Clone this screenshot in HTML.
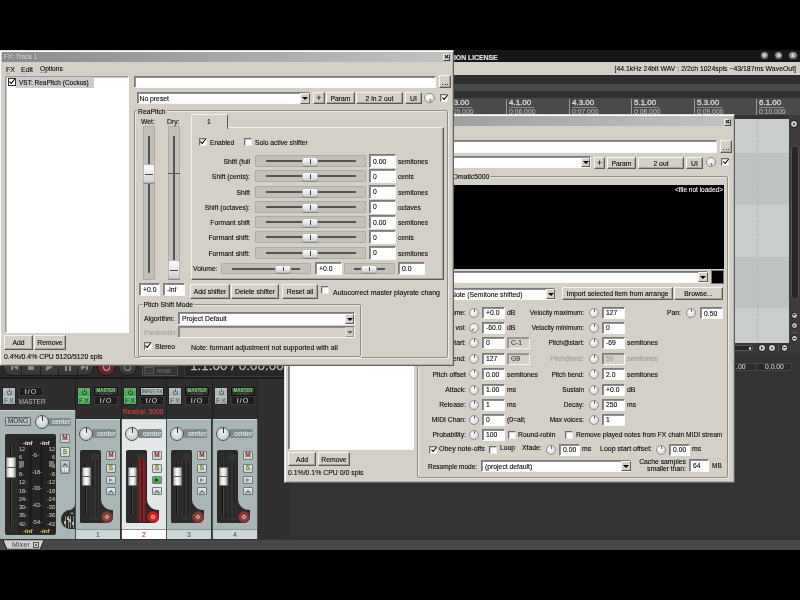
<!DOCTYPE html>
<html><head><meta charset="utf-8">
<style>
*{margin:0;padding:0;box-sizing:border-box}
html,body{width:800px;height:600px;overflow:hidden;background:#000}
body{position:relative;font-family:"Liberation Sans",sans-serif;font-size:6.8px;color:#000;-webkit-text-stroke:0.08px currentColor}
.L{position:absolute;left:0;top:0;width:800px;height:600px}
.a{position:absolute}
.t{position:absolute;white-space:nowrap;line-height:1}
.btn{position:absolute;background:#d4d0c8;border:1px solid;border-color:#f4f3f0 #5a5a5a #5a5a5a #f4f3f0;box-shadow:inset -1px -1px 0 #a8a59f;text-align:center;white-space:nowrap;display:flex;align-items:center;justify-content:center;font-size:6.8px}
.ed{position:absolute;background:#fff;border:1px solid;border-color:#7a7a7a #fafafa #fafafa #7a7a7a;box-shadow:inset 1px 1px 0 #909090;white-space:nowrap;padding-left:3px;display:flex;align-items:center;font-size:6.8px}
.dis{background:#d4d0c8;color:#9a9a9a}
.cb{position:absolute;width:8px;height:8px;background:#fff;border:1px solid;border-color:#6a6a6a #e8e8e8 #e8e8e8 #6a6a6a;box-shadow:inset 0.5px 0.5px 0 #aaa}
.ck::after{content:"";position:absolute;width:4.5px;height:2.2px;border-left:1.6px solid #000;border-bottom:1.6px solid #000;transform:rotate(-50deg);transform-origin:0 0;top:3.2px;left:0.6px}
.grp{position:absolute;border:1px solid #8f8d88;box-shadow:1px 1px 0 #ebe9e4, inset 1px 1px 0 #ebe9e4;border-radius:2px}
.win{position:absolute;background:#d4d0c8;border:1px solid;border-color:#dcd9d2 #5e5e5e #5e5e5e #dcd9d2;box-shadow:inset 1px 1px 0 #fff, inset -1px -1px 0 #b5b2ab}
.dd{position:absolute;background:#d4d0c8;border:1px solid;border-color:#f4f3f0 #5a5a5a #5a5a5a #f4f3f0}
.dd::after{content:"";position:absolute;left:50%;top:50%;margin-left:-3px;margin-top:-1.5px;border-left:3px solid transparent;border-right:3px solid transparent;border-top:3.5px solid #000}
.hs{position:absolute;background:#c3c0b9;border:1px solid #aeaba4;border-radius:1px}
.hs .g{position:absolute;height:2px;background:#555;top:50%;margin-top:-1px}
.th{position:absolute;background:linear-gradient(180deg,#fdfdfd,#e6e6e6 60%,#cfcfcf);border:1px solid #b8b8b8;border-radius:2px;box-shadow:0 1px 0 #888}
.th::after{content:"";position:absolute;left:50%;top:1px;bottom:1px;width:1px;background:#444}
.vt::after{left:1px;right:1px;top:50%;bottom:auto;width:auto;height:1px}
.knob{position:absolute;border-radius:50%;background:radial-gradient(circle at 40% 35%,#ffffff,#e4e4e4 55%,#c4c4c4);border:1px solid #8f8f8f}
</style></head><body><div id="root" style="position:absolute;left:0;top:0;width:800px;height:600px;filter:blur(0.6px);will-change:transform">
<div class="L" id="main">
<div class="a" style="left:0px;top:50px;width:800px;height:12px;background:#161616"></div>
<div class="t" style="left:454px;top:54px;font-size:7px;font-weight:bold;color:#e6e6e6;letter-spacing:-0.1px">ION LICENSE</div>
<div class="a" style="left:759.9px;top:51px;width:9.2px;height:9.2px;border-radius:50%;background:radial-gradient(circle at 50% 35%,#b0b0b0,#808080 60%,#5a5a5a);border:0.6px solid #2a2a2a;color:#e8e8e8;font-size:6px;font-weight:bold;display:flex;align-items:center;justify-content:center;line-height:1;padding-bottom:1px">v</div>
<div class="a" style="left:774.1999999999999px;top:51px;width:9.2px;height:9.2px;border-radius:50%;background:radial-gradient(circle at 50% 35%,#b0b0b0,#808080 60%,#5a5a5a);border:0.6px solid #2a2a2a;color:#e8e8e8;font-size:6px;font-weight:bold;display:flex;align-items:center;justify-content:center;line-height:1;padding-bottom:1px">o</div>
<div class="a" style="left:788.4px;top:51px;width:9.2px;height:9.2px;border-radius:50%;background:radial-gradient(circle at 50% 35%,#b0b0b0,#808080 60%,#5a5a5a);border:0.6px solid #2a2a2a;color:#e8e8e8;font-size:6px;font-weight:bold;display:flex;align-items:center;justify-content:center;line-height:1;padding-bottom:1px">x</div>
<div class="a" style="left:0px;top:62px;width:800px;height:13px;background:#d4d0c8"></div>
<div class="t" style="right:4px;top:66.3px;font-size:6.9px;">[44.1kHz 24bit WAV : 2/2ch 1024spls ~43/187ms WaveOut]</div>
<div class="a" style="left:0px;top:75px;width:800px;height:9px;background:#2f2f2f"></div>
<div class="a" style="left:0px;top:84px;width:800px;height:7px;background:#484848"></div>
<div class="a" style="left:0px;top:91px;width:800px;height:7px;background:#313131"></div>
<div class="a" style="left:0px;top:98px;width:800px;height:17px;background:#4a4a4a"></div>
<div class="a" style="left:0px;top:115px;width:800px;height:434.5px;background:#333"></div>
<div class="a" style="left:444px;top:99px;width:1px;height:16px;background:#9a9a9a"></div>
<div class="t" style="left:447px;top:99.3px;font-size:8px;color:#d4d4d4;-webkit-text-stroke:0.35px #d4d4d4">3.3.00</div>
<div class="a" style="left:447px;top:107px;width:25px;height:1px;background:#8a8a8a"></div>
<div class="t" style="left:447px;top:108.8px;font-size:6.8px;color:#b8b8b8">0:05.000</div>
<div class="a" style="left:506px;top:99px;width:1px;height:16px;background:#9a9a9a"></div>
<div class="t" style="left:509px;top:99.3px;font-size:8px;color:#d4d4d4;-webkit-text-stroke:0.35px #d4d4d4">4.1.00</div>
<div class="a" style="left:509px;top:107px;width:25px;height:1px;background:#8a8a8a"></div>
<div class="t" style="left:509px;top:108.8px;font-size:6.8px;color:#b8b8b8">0:06.000</div>
<div class="a" style="left:569px;top:99px;width:1px;height:16px;background:#9a9a9a"></div>
<div class="t" style="left:572px;top:99.3px;font-size:8px;color:#d4d4d4;-webkit-text-stroke:0.35px #d4d4d4">4.3.00</div>
<div class="a" style="left:572px;top:107px;width:25px;height:1px;background:#8a8a8a"></div>
<div class="t" style="left:572px;top:108.8px;font-size:6.8px;color:#b8b8b8">0:07.000</div>
<div class="a" style="left:631px;top:99px;width:1px;height:16px;background:#9a9a9a"></div>
<div class="t" style="left:634px;top:99.3px;font-size:8px;color:#d4d4d4;-webkit-text-stroke:0.35px #d4d4d4">5.1.00</div>
<div class="a" style="left:634px;top:107px;width:25px;height:1px;background:#8a8a8a"></div>
<div class="t" style="left:634px;top:108.8px;font-size:6.8px;color:#b8b8b8">0:08.000</div>
<div class="a" style="left:694px;top:99px;width:1px;height:16px;background:#9a9a9a"></div>
<div class="t" style="left:697px;top:99.3px;font-size:8px;color:#d4d4d4;-webkit-text-stroke:0.35px #d4d4d4">5.3.00</div>
<div class="a" style="left:697px;top:107px;width:25px;height:1px;background:#8a8a8a"></div>
<div class="t" style="left:697px;top:108.8px;font-size:6.8px;color:#b8b8b8">0:09.000</div>
<div class="a" style="left:756px;top:99px;width:1px;height:16px;background:#9a9a9a"></div>
<div class="t" style="left:759px;top:99.3px;font-size:8px;color:#d4d4d4;-webkit-text-stroke:0.35px #d4d4d4">6.1.00</div>
<div class="a" style="left:759px;top:107px;width:25px;height:1px;background:#8a8a8a"></div>
<div class="t" style="left:759px;top:108.8px;font-size:6.8px;color:#b8b8b8">0:10.000</div>
<div class="a" style="left:735px;top:119px;width:54px;height:33.7px;background:#cacdcd"></div>
<div class="a" style="left:735px;top:152.7px;width:54px;height:52.0px;background:#bfc2c2"></div>
<div class="a" style="left:735px;top:204.7px;width:54px;height:52.0px;background:#cacdcd"></div>
<div class="a" style="left:735px;top:256.7px;width:54px;height:51.6px;background:#bfc2c2"></div>
<div class="a" style="left:735px;top:308.3px;width:54px;height:34.7px;background:#cacdcd"></div>
<div class="a" style="left:756.5px;top:119px;width:1px;height:224px;background:repeating-linear-gradient(180deg,#b3b6b6 0 3px,transparent 3px 5px)"></div>
<div class="a" style="left:789px;top:115px;width:11px;height:237px;background:#3b3b3b"></div>
<div class="a" style="left:791px;top:144.5px;width:7.5px;height:155px;background:#262626;border:1px solid #555;border-radius:4px"></div>
<div class="a" style="left:790.2px;top:120.2px;width:7.6px;height:7.6px;border-radius:50%;background:radial-gradient(circle at 50% 40%,#e6e6e6,#a9a9a9);border:0.5px solid #222;display:flex;align-items:center;justify-content:center;color:#333;font-size:5px;font-weight:bold;line-height:1"><div style="width:2px;height:2px;border-radius:50%;background:#333"></div></div>
<div class="a" style="left:790.6px;top:311.7px;width:7.2px;height:7.2px;border-radius:50%;background:radial-gradient(circle at 50% 40%,#e6e6e6,#a9a9a9);border:0.5px solid #222;display:flex;align-items:center;justify-content:center;color:#333;font-size:5px;font-weight:bold;line-height:1"><div style="border-top:2.5px solid #333;border-left:2px solid transparent;border-right:2px solid transparent"></div></div>
<div class="a" style="left:790.6px;top:321.7px;width:7.2px;height:7.2px;border-radius:50%;background:radial-gradient(circle at 50% 40%,#e6e6e6,#a9a9a9);border:0.5px solid #222;display:flex;align-items:center;justify-content:center;color:#333;font-size:5px;font-weight:bold;line-height:1">+</div>
<div class="a" style="left:791px;top:331.5px;width:6px;height:1px;background:#555"></div>
<div class="a" style="left:790.6px;top:334.7px;width:7.2px;height:7.2px;border-radius:50%;background:radial-gradient(circle at 50% 40%,#e6e6e6,#a9a9a9);border:0.5px solid #222;display:flex;align-items:center;justify-content:center;color:#333;font-size:5px;font-weight:bold;line-height:1"><div style="width:3px;height:1px;background:#333"></div></div>
<div class="a" style="left:735px;top:343px;width:65px;height:10px;background:#3a3a3a"></div>
<div class="a" style="left:735px;top:345.3px;width:18.3px;height:6px;background:#262626;border:1px solid #555;border-left:none;border-radius:0 3px 3px 0"></div>
<div class="a" style="left:748.5px;top:347px;width:2.5px;height:2.5px;background:#ddd;border-radius:50%"></div>
<div class="a" style="left:758.4px;top:344.4px;width:7.2px;height:7.2px;border-radius:50%;background:radial-gradient(circle at 50% 40%,#e6e6e6,#a9a9a9);border:0.5px solid #222;display:flex;align-items:center;justify-content:center;color:#333;font-size:5px;font-weight:bold;line-height:1"><div style="border-left:2.5px solid #333;border-top:2px solid transparent;border-bottom:2px solid transparent"></div></div>
<div class="a" style="left:768.4px;top:344.4px;width:7.2px;height:7.2px;border-radius:50%;background:radial-gradient(circle at 50% 40%,#e6e6e6,#a9a9a9);border:0.5px solid #222;display:flex;align-items:center;justify-content:center;color:#333;font-size:5px;font-weight:bold;line-height:1"><div style="width:2px;height:2px;border-radius:50%;background:#555"></div></div>
<div class="a" style="left:778px;top:345px;width:1px;height:6px;background:#555"></div>
<div class="a" style="left:780.6px;top:344.4px;width:7.2px;height:7.2px;border-radius:50%;background:radial-gradient(circle at 50% 40%,#e6e6e6,#a9a9a9);border:0.5px solid #222;display:flex;align-items:center;justify-content:center;color:#333;font-size:5px;font-weight:bold;line-height:1"><div style="width:3px;height:1px;background:#333"></div></div>
<div class="a" style="left:735px;top:352.5px;width:65px;height:187px;background:#333"></div>
<div class="a" style="left:733px;top:362.8px;width:59px;height:8.5px;background:#2a2a2a;border:1px solid #474747;border-radius:2px"></div>
<div class="a" style="left:755.5px;top:363px;width:1px;height:8px;background:#474747"></div>
<div class="t" style="left:765px;top:364px;font-size:6.8px;color:#cfcfcf">0.0.00</div>
<div class="t" style="left:736px;top:364px;font-size:6.8px;color:#cfcfcf">.00</div>
<div class="a" style="left:0px;top:539.5px;width:800px;height:10px;background:#474747"></div>
</div>
<div class="L" id="mixer">
<div class="a" style="left:0px;top:365px;width:290px;height:13px;background:#2a2a2a"></div>
<div class="a" style="left:0px;top:377px;width:290px;height:2px;background:#1b1b1b"></div>
<div class="a" style="left:3px;top:355px;width:91px;height:21px;background:linear-gradient(#474747,#363636);border:1px solid #1a1a1a;border-radius:0 0 8px 8px"></div>
<div class="a" style="left:21px;top:356px;width:1px;height:19px;background:#202020"></div>
<div class="a" style="left:40px;top:356px;width:1px;height:19px;background:#202020"></div>
<div class="a" style="left:58px;top:356px;width:1px;height:19px;background:#202020"></div>
<div class="a" style="left:77px;top:356px;width:1px;height:19px;background:#202020"></div>
<div class="a" style="left:11px;top:364px;width:1.5px;height:6px;background:#8c8c8c"></div>
<div class="a" style="left:12.5px;top:364px;border-right:5px solid #8c8c8c;border-top:3px solid transparent;border-bottom:3px solid transparent"></div>
<div class="a" style="left:27.5px;top:364px;width:6px;height:6px;background:#8c8c8c"></div>
<div class="a" style="left:46px;top:363px;border-left:7px solid #8c8c8c;border-top:4px solid transparent;border-bottom:4px solid transparent"></div>
<div class="a" style="left:64.5px;top:363.5px;width:2px;height:7px;background:#8c8c8c"></div>
<div class="a" style="left:68.5px;top:363.5px;width:2px;height:7px;background:#8c8c8c"></div>
<div class="a" style="left:81px;top:364px;border-left:5px solid #8c8c8c;border-top:3px solid transparent;border-bottom:3px solid transparent"></div>
<div class="a" style="left:86px;top:364px;width:1.5px;height:6px;background:#8c8c8c"></div>
<div class="a" style="left:97.0px;top:356.5px;width:19.0px;height:19.0px;border-radius:50%;background:radial-gradient(circle,#7a3232,#622424 70%,#451818);border:1px solid #1a1a1a;box-sizing:border-box"></div>
<div class="a" style="left:102.7px;top:363.2px;width:7.6px;height:7.6px;border-radius:50%;background:transparent;border:1.6px solid #e8c4c4;box-sizing:border-box"></div>
<div class="a" style="left:118.0px;top:356.5px;width:19.0px;height:19.0px;border-radius:50%;background:linear-gradient(#474747,#363636);border:1px solid #1a1a1a;box-sizing:border-box"></div>
<div class="a" style="left:124.0px;top:363.5px;width:7.0px;height:7.0px;border-radius:50%;background:transparent;border:1.4px solid #8c8c8c;border-top-color:transparent;box-sizing:border-box"></div>
<div class="a" style="left:142px;top:366px;width:36px;height:10px;background:#333;border:1px solid #505050;border-radius:2px"></div>
<div class="t" style="left:157px;top:369px;font-size:5px;color:#666;font-weight:bold">NONE</div>
<div class="a" style="left:144px;top:367px;width:10px;height:7px;border:1px solid #555;background:#3a3a3a"></div>
<div class="a" style="left:184px;top:363px;width:106px;height:14px;background:#262626;border:1px solid #3c3c3c;border-radius:2px"></div>
<div class="t" style="left:190px;top:359.4px;font-size:13.5px;color:#bababa;-webkit-text-stroke:0.3px #bababa">1.1.00 / 0:00.000</div>
<div class="a" style="left:0px;top:379px;width:290px;height:160px;background:#2e2e2e"></div>
<div class="a" style="left:258px;top:379px;width:26px;height:160px;background:#303030"></div>
<div class="a" style="left:0px;top:410px;width:76px;height:129px;background:#aab5b5"></div>
<div class="a" style="left:0px;top:410px;width:76px;height:1px;background:#cad3d3"></div>
<div class="a" style="left:75px;top:379px;width:1px;height:31px;background:#1e1e1e"></div>
<div class="a" style="left:75px;top:410px;width:1px;height:129px;background:#4a5050"></div>
<div class="a" style="left:2px;top:387px;width:14px;height:18px;background:#222;border-radius:1px"></div><div class="a" style="left:3px;top:388px;width:12px;height:8px;background:linear-gradient(#b7c3c3,#a8b4b4);display:flex;align-items:center;justify-content:center"><div style="position:relative;width:5px;height:5px;border-radius:50%;border:1px solid #5a6464;border-top-color:transparent;margin-top:1px"><div style="position:absolute;left:1px;top:-2px;width:1px;height:3px;background:#5a6464"></div></div></div><div class="a" style="left:3px;top:396px;width:12px;height:8px;background:linear-gradient(#b9c5c5,#a3afaf);color:#4f5a5a;font-size:7px;display:flex;align-items:center;justify-content:center;letter-spacing:1px;padding-left:1px">FX</div>
<div class="a" style="left:19px;top:387px;width:24px;height:9px;background:#1c1c1c;border:1px solid #3a3a3a;color:#d8d8d8;font-size:7px;text-align:center;line-height:7px;letter-spacing:1px">I/O</div>
<div class="t" style="left:18.5px;top:398.8px;font-size:6.5px;color:#bdbdbd;-webkit-text-stroke:0">MASTER</div>
<div class="a" style="left:5px;top:417px;width:26px;height:9px;background:linear-gradient(#c6d0d0,#aab6b6);border:1px solid #6f7a7a;border-radius:1px;color:#333;font-size:6.4px;font-weight:bold;display:flex;align-items:center;justify-content:center;line-height:1;font-weight:normal;border-color:#5b6666;-webkit-text-stroke:0.1px #333">MONO</div>
<div class="a" style="left:46px;top:418px;width:25px;height:8px;background:#7f8b8b;border-radius:0 2px 2px 0"></div>
<div class="t" style="left:52px;top:419px;font-size:6.6px;color:#e8eeee">center</div>
<div class="a" style="left:35px;top:415px;width:14px;height:14px;border-radius:50%;background:radial-gradient(circle at 45% 40%,#f2f2f2,#cfd4d4 60%,#9aa2a2);border:1.5px solid #4a5454;box-sizing:border-box"></div>
<div class="a" style="left:42px;top:416px;width:1px;height:5px;background:#333"></div>
<div class="a" style="left:5px;top:434px;width:51px;height:101px;background:#2b2b2b;border-radius:2px"></div>
<div class="a" style="left:18px;top:438px;width:37px;height:95px;background:#242424"></div>
<div class="a" style="left:29px;top:447px;width:3px;height:84px;background:#1d1d1d"></div>
<div class="a" style="left:40px;top:447px;width:3px;height:84px;background:#1d1d1d"></div>
<div class="a" style="left:10px;top:445px;width:1px;height:81px;background:#111;box-shadow:1px 0 0 #444"></div>
<div class="a" style="left:6px;top:457px;width:10px;height:21px;background:linear-gradient(90deg,#bdbdbd,#fafafa 40%,#e8e8e8 70%,#a8a8a8);border-radius:1px;border:1px solid #777"></div>
<div class="a" style="left:7px;top:467px;width:8px;height:1px;background:#555"></div>
<div class="t" style="left:23px;top:440px;font-size:6.2px;color:#e0e0e0;font-weight:bold">-inf</div>
<div class="t" style="left:40px;top:440px;font-size:6.2px;color:#e0e0e0;font-weight:bold">-inf</div>
<div class="t" style="left:23px;top:528px;font-size:6.2px;color:#d8c860;font-weight:bold">-inf</div>
<div class="t" style="left:40px;top:528px;font-size:6.2px;color:#d8c860;font-weight:bold">-inf</div>
<div class="t" style="left:19px;top:447px;font-size:5.6px;color:#c4c4c4">12</div>
<div class="t" style="right:745px;top:447px;font-size:5.6px;color:#c4c4c4">12</div>
<div class="t" style="left:19px;top:455px;font-size:5.6px;color:#c4c4c4">6</div>
<div class="t" style="right:745px;top:455px;font-size:5.6px;color:#c4c4c4">6</div>
<div class="t" style="left:19px;top:464px;font-size:5.6px;color:#c4c4c4">0-</div>
<div class="t" style="right:745px;top:464px;font-size:5.6px;color:#c4c4c4">-0</div>
<div class="t" style="left:19px;top:472px;font-size:5.6px;color:#c4c4c4">6-</div>
<div class="t" style="right:745px;top:472px;font-size:5.6px;color:#c4c4c4">-6</div>
<div class="t" style="left:19px;top:480px;font-size:5.6px;color:#c4c4c4">12-</div>
<div class="t" style="right:745px;top:480px;font-size:5.6px;color:#c4c4c4">-12</div>
<div class="t" style="left:19px;top:489px;font-size:5.6px;color:#c4c4c4">18-</div>
<div class="t" style="right:745px;top:489px;font-size:5.6px;color:#c4c4c4">-18</div>
<div class="t" style="left:19px;top:497px;font-size:5.6px;color:#c4c4c4">24-</div>
<div class="t" style="right:745px;top:497px;font-size:5.6px;color:#c4c4c4">-24</div>
<div class="t" style="left:19px;top:505px;font-size:5.6px;color:#c4c4c4">30-</div>
<div class="t" style="right:745px;top:505px;font-size:5.6px;color:#c4c4c4">-30</div>
<div class="t" style="left:19px;top:513px;font-size:5.6px;color:#c4c4c4">36-</div>
<div class="t" style="right:745px;top:513px;font-size:5.6px;color:#c4c4c4">-36</div>
<div class="t" style="left:19px;top:522px;font-size:5.6px;color:#c4c4c4">42-</div>
<div class="t" style="right:745px;top:522px;font-size:5.6px;color:#c4c4c4">-42</div>
<div class="t" style="left:32px;top:453px;font-size:5.6px;color:#c4c4c4">-6-</div>
<div class="t" style="left:32px;top:470px;font-size:5.6px;color:#c4c4c4">-18-</div>
<div class="t" style="left:32px;top:486px;font-size:5.6px;color:#c4c4c4">-30-</div>
<div class="t" style="left:32px;top:503px;font-size:5.6px;color:#c4c4c4">-42-</div>
<div class="t" style="left:32px;top:520px;font-size:5.6px;color:#c4c4c4">-54-</div>
<div class="a" style="left:19px;top:461px;width:5px;height:6px;background:#777"></div>
<div class="a" style="left:49px;top:461px;width:5px;height:6px;background:#777"></div>
<div class="a" style="left:60px;top:434px;width:10px;height:9px;background:linear-gradient(#e2e8e8,#c9d1d1);border:1px solid #6f7a7a;border-radius:1px;color:#8a1c1c;font-size:6.5px;font-weight:bold;display:flex;align-items:center;justify-content:center;line-height:1;">M</div>
<div class="a" style="left:60px;top:447px;width:10px;height:10px;background:linear-gradient(#e2e8e8,#c9d1d1);border:1px solid #6f7a7a;border-radius:1px;color:#7d7d22;font-size:6.5px;font-weight:bold;display:flex;align-items:center;justify-content:center;line-height:1;">S</div>
<div class="a" style="left:60px;top:460px;width:10px;height:14px;background:linear-gradient(#c6d0d0,#9aa6a6);border:1px solid #6f7a7a;border-radius:1px;color:#000;font-size:6.5px;font-weight:bold;display:flex;align-items:center;justify-content:center;line-height:1;"><span style="display:flex;flex-direction:column;align-items:center"><span style="width:4px;height:4px;border-left:1px solid #556;border-top:1px solid #556;transform:rotate(45deg);margin-top:2px"></span><span style="font-size:5px;color:#fff">TR</span></span></div>
<div class="a" style="left:66px;top:504px;width:9px;height:10px;background:#2b2b2b"></div>
<div class="a" style="left:58px;top:496px;width:17px;height:15px;background:#aab5b5;border-bottom-right-radius:11px 6px"></div>
<div class="a" style="left:61px;top:510px;width:14px;height:18.5px;background:#2b2b2b;border-radius:9px 0 0 9px"></div>
<div class="a" style="left:65px;top:516px;width:0.8px;height:12px;background:#8a8a8a"></div>
<div class="a" style="left:64.3px;top:521px;width:2.2px;height:2.5px;background:#bbb"></div>
<div class="a" style="left:67.5px;top:516px;width:0.8px;height:12px;background:#8a8a8a"></div>
<div class="a" style="left:66.8px;top:517px;width:2.2px;height:2.5px;background:#bbb"></div>
<div class="a" style="left:70px;top:516px;width:0.8px;height:12px;background:#8a8a8a"></div>
<div class="a" style="left:69.3px;top:519px;width:2.2px;height:2.5px;background:#bbb"></div>
<div class="a" style="left:72.5px;top:516px;width:0.8px;height:12px;background:#8a8a8a"></div>
<div class="a" style="left:71.8px;top:522px;width:2.2px;height:2.5px;background:#bbb"></div>
<div class="a" style="left:69.5px;top:511.5px;border-bottom:2.5px solid #999;border-left:2px solid transparent;border-right:2px solid transparent"></div>
<div class="a" style="left:76px;top:419px;width:44px;height:110px;background:#aab6b6"></div><div class="a" style="left:76px;top:419px;width:44px;height:1px;background:#c9d3d3"></div><div class="a" style="left:77px;top:387px;width:14px;height:18px;background:#222;border-radius:1px"></div><div class="a" style="left:78px;top:388px;width:12px;height:8px;background:linear-gradient(#5fb36a,#4c9f58);display:flex;align-items:center;justify-content:center"><div style="position:relative;width:5px;height:5px;border-radius:50%;border:1px solid #1d5a25;border-top-color:transparent;margin-top:1px"><div style="position:absolute;left:1px;top:-2px;width:1px;height:3px;background:#1d5a25"></div></div></div><div class="a" style="left:78px;top:396px;width:12px;height:8px;background:linear-gradient(#6cc077,#55ab60);color:#0f3d16;font-size:7px;display:flex;align-items:center;justify-content:center;letter-spacing:1px;padding-left:1px">FX</div><div class="a" style="left:94px;top:387px;width:24px;height:9px;background:linear-gradient(#3d4a3d,#262a26);border:1px solid #111;color:#7ccf7c;font-size:4.5px;font-weight:bold;text-align:center;line-height:5px;overflow:hidden">MASTER<br><span style="color:#555">SEND</span></div><div class="a" style="left:94px;top:396px;width:24px;height:9px;background:#1c1c1c;border:1px solid #3a3a3a;color:#d8d8d8;font-size:7px;text-align:center;line-height:7px;letter-spacing:1px">I/O</div><div class="a" style="left:92px;top:429px;width:24px;height:9px;background:#7f8b8b;border-radius:2px"></div><div class="t" style="left:97px;top:431px;font-size:6.6px;color:#e8eeee">center</div><div class="a" style="left:79px;top:427px;width:14px;height:14px;border-radius:50%;background:radial-gradient(circle at 45% 40%,#f2f2f2,#cfd4d4 60%,#9aa2a2);border:1.5px solid #4a5454;box-sizing:border-box"></div><div class="a" style="left:86px;top:428px;width:1px;height:5px;background:#333"></div><div class="a" style="left:80px;top:450px;width:21px;height:73px;background:#2a2a2a;border-radius:2px"></div><div class="a" style="left:80px;top:497px;width:33px;height:26px;background:#2a2a2a;border-radius:0 0 6px 2px"></div><div class="a" style="left:101px;top:496px;width:13px;height:14px;background:#aab6b6;border-radius:0 0 0 11px"></div><div class="a" style="left:91px;top:454px;width:8px;height:66px;background:#343434"></div><div class="a" style="left:92px;top:460px;width:2px;height:58px;background:#262626"></div><div class="a" style="left:96px;top:460px;width:2px;height:58px;background:#262626"></div><div class="a" style="left:85px;top:462px;width:1px;height:53px;background:#111;box-shadow:1px 0 0 #444"></div><div class="a" style="left:82px;top:467px;width:9px;height:19px;background:linear-gradient(90deg,#bdbdbd,#fafafa 40%,#e8e8e8 70%,#a8a8a8);border-radius:1px;border:1px solid #777"></div><div class="a" style="left:83px;top:476px;width:7px;height:1px;background:#555"></div><div class="a" style="left:101px;top:511px;width:12px;height:12px;border-radius:50%;background:radial-gradient(circle,#a85858,#7a3434 60%,#4e2020);"></div><div class="a" style="left:105px;top:515px;width:4px;height:4px;border-radius:50%;background:transparent;border:1px solid #eec;box-sizing:border-box;opacity:.7"></div><div class="a" style="left:106px;top:451px;width:10px;height:9px;background:linear-gradient(#e2e8e8,#c9d1d1);border:1px solid #6f7a7a;border-radius:1px;color:#8a1c1c;font-size:6.5px;font-weight:bold;display:flex;align-items:center;justify-content:center;line-height:1;">M</div><div class="a" style="left:106px;top:464px;width:10px;height:9px;background:linear-gradient(#e2e8e8,#c9d1d1);border:1px solid #6f7a7a;border-radius:1px;color:#7d7d22;font-size:6.5px;font-weight:bold;display:flex;align-items:center;justify-content:center;line-height:1;">S</div><div class="a" style="left:106px;top:476px;width:10px;height:8px;background:linear-gradient(#e2e8e8,#c9d1d1);border:1px solid #6f7a7a;border-radius:1px;color:#000;font-size:6.5px;font-weight:bold;display:flex;align-items:center;justify-content:center;line-height:1;"><span style="border-left:4px solid #7c8888;border-top:2.5px solid transparent;border-bottom:2.5px solid transparent"></span></div><div class="a" style="left:106px;top:487px;width:10px;height:8px;background:linear-gradient(#e2e8e8,#c9d1d1);border:1px solid #6f7a7a;border-radius:1px;color:#000;font-size:6.5px;font-weight:bold;display:flex;align-items:center;justify-content:center;line-height:1;"><span style="width:4px;height:4px;border-left:1px solid #556;border-top:1px solid #556;transform:rotate(45deg);margin-top:3px"></span></div><div class="a" style="left:76px;top:529px;width:44px;height:10px;background:#cdd6d6;border-top:1px solid #8a9494"></div><div class="t" style="left:96px;top:532px;font-size:6.8px;color:#555">1</div>
<div class="a" style="left:122px;top:419px;width:44px;height:110px;background:#e3e7e7"></div><div class="a" style="left:122px;top:419px;width:44px;height:1px;background:#c9d3d3"></div><div class="a" style="left:123px;top:387px;width:14px;height:18px;background:#222;border-radius:1px"></div><div class="a" style="left:124px;top:388px;width:12px;height:8px;background:linear-gradient(#5fb36a,#4c9f58);display:flex;align-items:center;justify-content:center"><div style="position:relative;width:5px;height:5px;border-radius:50%;border:1px solid #1d5a25;border-top-color:transparent;margin-top:1px"><div style="position:absolute;left:1px;top:-2px;width:1px;height:3px;background:#1d5a25"></div></div></div><div class="a" style="left:124px;top:396px;width:12px;height:8px;background:linear-gradient(#6cc077,#55ab60);color:#0f3d16;font-size:7px;display:flex;align-items:center;justify-content:center;letter-spacing:1px;padding-left:1px">FX</div><div class="a" style="left:140px;top:387px;width:24px;height:9px;background:linear-gradient(#c9d0d0,#9aa5a5);border:1px solid #111;color:#5a6a6a;font-size:4.5px;font-weight:bold;text-align:center;line-height:7px">INPUT FX</div><div class="a" style="left:140px;top:396px;width:24px;height:9px;background:#1c1c1c;border:1px solid #3a3a3a;color:#d8d8d8;font-size:7px;text-align:center;line-height:7px;letter-spacing:1px">I/O</div><div class="t" style="left:123px;top:409px;font-size:6.6px;color:#e64040">ReaSar..5000</div><div class="a" style="left:138px;top:429px;width:24px;height:9px;background:#7f8b8b;border-radius:2px"></div><div class="t" style="left:143px;top:431px;font-size:6.6px;color:#e8eeee">center</div><div class="a" style="left:125px;top:427px;width:14px;height:14px;border-radius:50%;background:radial-gradient(circle at 45% 40%,#f2f2f2,#cfd4d4 60%,#9aa2a2);border:1.5px solid #4a5454;box-sizing:border-box"></div><div class="a" style="left:132px;top:428px;width:1px;height:5px;background:#333"></div><div class="a" style="left:126px;top:450px;width:21px;height:73px;background:#2a2a2a;border-radius:2px"></div><div class="a" style="left:126px;top:497px;width:33px;height:26px;background:#2a2a2a;border-radius:0 0 6px 2px"></div><div class="a" style="left:147px;top:496px;width:13px;height:14px;background:#e3e7e7;border-radius:0 0 0 11px"></div><div class="a" style="left:137px;top:454px;width:8px;height:66px;background:#343434"></div><div class="a" style="left:137.5px;top:459px;width:8px;height:63px;background:linear-gradient(90deg,#5a1a1a,#8a2a2a 30%,#3a1010 50%,#8a2a2a 70%,#5a1a1a)"></div><div class="a" style="left:131px;top:462px;width:1px;height:53px;background:#111;box-shadow:1px 0 0 #444"></div><div class="a" style="left:128px;top:467px;width:9px;height:19px;background:linear-gradient(90deg,#bdbdbd,#fafafa 40%,#e8e8e8 70%,#a8a8a8);border-radius:1px;border:1px solid #777"></div><div class="a" style="left:129px;top:476px;width:7px;height:1px;background:#555"></div><div class="a" style="left:146.7px;top:510.7px;width:12.6px;height:12.6px;border-radius:50%;background:radial-gradient(circle,#e84848,#c01818 60%,#7a0a0a);"></div><div class="a" style="left:151px;top:515px;width:4px;height:4px;border-radius:50%;background:transparent;border:1px solid #eec;box-sizing:border-box;opacity:.7"></div><div class="a" style="left:152px;top:451px;width:10px;height:9px;background:linear-gradient(#e2e8e8,#c9d1d1);border:1px solid #6f7a7a;border-radius:1px;color:#8a1c1c;font-size:6.5px;font-weight:bold;display:flex;align-items:center;justify-content:center;line-height:1;">M</div><div class="a" style="left:152px;top:464px;width:10px;height:9px;background:linear-gradient(#e2e8e8,#c9d1d1);border:1px solid #6f7a7a;border-radius:1px;color:#7d7d22;font-size:6.5px;font-weight:bold;display:flex;align-items:center;justify-content:center;line-height:1;">S</div><div class="a" style="left:152px;top:476px;width:10px;height:8px;background:linear-gradient(#66c26f,#45a24f);border:1px solid #6f7a7a;border-radius:1px;color:#000;font-size:6.5px;font-weight:bold;display:flex;align-items:center;justify-content:center;line-height:1;"><span style="border-left:4px solid #0b4a0b;border-top:2.5px solid transparent;border-bottom:2.5px solid transparent"></span></div><div class="a" style="left:152px;top:487px;width:10px;height:8px;background:linear-gradient(#e2e8e8,#c9d1d1);border:1px solid #6f7a7a;border-radius:1px;color:#000;font-size:6.5px;font-weight:bold;display:flex;align-items:center;justify-content:center;line-height:1;"><span style="width:4px;height:4px;border-left:1px solid #556;border-top:1px solid #556;transform:rotate(45deg);margin-top:3px"></span></div><div class="a" style="left:122px;top:529px;width:44px;height:10px;background:#ffffff;border-top:1px solid #8a9494"></div><div class="t" style="left:142px;top:532px;font-size:6.8px;color:#c02020">2</div>
<div class="a" style="left:167px;top:419px;width:44px;height:110px;background:#aab6b6"></div><div class="a" style="left:167px;top:419px;width:44px;height:1px;background:#c9d3d3"></div><div class="a" style="left:168px;top:387px;width:14px;height:18px;background:#222;border-radius:1px"></div><div class="a" style="left:169px;top:388px;width:12px;height:8px;background:linear-gradient(#b7c3c3,#a8b4b4);display:flex;align-items:center;justify-content:center"><div style="position:relative;width:5px;height:5px;border-radius:50%;border:1px solid #5a6464;border-top-color:transparent;margin-top:1px"><div style="position:absolute;left:1px;top:-2px;width:1px;height:3px;background:#5a6464"></div></div></div><div class="a" style="left:169px;top:396px;width:12px;height:8px;background:linear-gradient(#b9c5c5,#a3afaf);color:#4f5a5a;font-size:7px;display:flex;align-items:center;justify-content:center;letter-spacing:1px;padding-left:1px">FX</div><div class="a" style="left:185px;top:387px;width:24px;height:9px;background:linear-gradient(#3d4a3d,#262a26);border:1px solid #111;color:#7ccf7c;font-size:4.5px;font-weight:bold;text-align:center;line-height:5px;overflow:hidden">MASTER<br><span style="color:#555">SEND</span></div><div class="a" style="left:185px;top:396px;width:24px;height:9px;background:#1c1c1c;border:1px solid #3a3a3a;color:#d8d8d8;font-size:7px;text-align:center;line-height:7px;letter-spacing:1px">I/O</div><div class="a" style="left:183px;top:429px;width:24px;height:9px;background:#7f8b8b;border-radius:2px"></div><div class="t" style="left:188px;top:431px;font-size:6.6px;color:#e8eeee">center</div><div class="a" style="left:170px;top:427px;width:14px;height:14px;border-radius:50%;background:radial-gradient(circle at 45% 40%,#f2f2f2,#cfd4d4 60%,#9aa2a2);border:1.5px solid #4a5454;box-sizing:border-box"></div><div class="a" style="left:177px;top:428px;width:1px;height:5px;background:#333"></div><div class="a" style="left:171px;top:450px;width:21px;height:73px;background:#2a2a2a;border-radius:2px"></div><div class="a" style="left:171px;top:497px;width:33px;height:26px;background:#2a2a2a;border-radius:0 0 6px 2px"></div><div class="a" style="left:192px;top:496px;width:13px;height:14px;background:#aab6b6;border-radius:0 0 0 11px"></div><div class="a" style="left:182px;top:454px;width:8px;height:66px;background:#343434"></div><div class="a" style="left:183px;top:460px;width:2px;height:58px;background:#262626"></div><div class="a" style="left:187px;top:460px;width:2px;height:58px;background:#262626"></div><div class="a" style="left:176px;top:462px;width:1px;height:53px;background:#111;box-shadow:1px 0 0 #444"></div><div class="a" style="left:173px;top:467px;width:9px;height:19px;background:linear-gradient(90deg,#bdbdbd,#fafafa 40%,#e8e8e8 70%,#a8a8a8);border-radius:1px;border:1px solid #777"></div><div class="a" style="left:174px;top:476px;width:7px;height:1px;background:#555"></div><div class="a" style="left:192px;top:511px;width:12px;height:12px;border-radius:50%;background:radial-gradient(circle,#a85858,#7a3434 60%,#4e2020);"></div><div class="a" style="left:196px;top:515px;width:4px;height:4px;border-radius:50%;background:transparent;border:1px solid #eec;box-sizing:border-box;opacity:.7"></div><div class="a" style="left:197px;top:451px;width:10px;height:9px;background:linear-gradient(#e2e8e8,#c9d1d1);border:1px solid #6f7a7a;border-radius:1px;color:#8a1c1c;font-size:6.5px;font-weight:bold;display:flex;align-items:center;justify-content:center;line-height:1;">M</div><div class="a" style="left:197px;top:464px;width:10px;height:9px;background:linear-gradient(#e2e8e8,#c9d1d1);border:1px solid #6f7a7a;border-radius:1px;color:#7d7d22;font-size:6.5px;font-weight:bold;display:flex;align-items:center;justify-content:center;line-height:1;">S</div><div class="a" style="left:197px;top:476px;width:10px;height:8px;background:linear-gradient(#e2e8e8,#c9d1d1);border:1px solid #6f7a7a;border-radius:1px;color:#000;font-size:6.5px;font-weight:bold;display:flex;align-items:center;justify-content:center;line-height:1;"><span style="border-left:4px solid #7c8888;border-top:2.5px solid transparent;border-bottom:2.5px solid transparent"></span></div><div class="a" style="left:197px;top:487px;width:10px;height:8px;background:linear-gradient(#e2e8e8,#c9d1d1);border:1px solid #6f7a7a;border-radius:1px;color:#000;font-size:6.5px;font-weight:bold;display:flex;align-items:center;justify-content:center;line-height:1;"><span style="width:4px;height:4px;border-left:1px solid #556;border-top:1px solid #556;transform:rotate(45deg);margin-top:3px"></span></div><div class="a" style="left:167px;top:529px;width:44px;height:10px;background:#cdd6d6;border-top:1px solid #8a9494"></div><div class="t" style="left:187px;top:532px;font-size:6.8px;color:#555">3</div>
<div class="a" style="left:213px;top:419px;width:44px;height:110px;background:#aab6b6"></div><div class="a" style="left:213px;top:419px;width:44px;height:1px;background:#c9d3d3"></div><div class="a" style="left:214px;top:387px;width:14px;height:18px;background:#222;border-radius:1px"></div><div class="a" style="left:215px;top:388px;width:12px;height:8px;background:linear-gradient(#b7c3c3,#a8b4b4);display:flex;align-items:center;justify-content:center"><div style="position:relative;width:5px;height:5px;border-radius:50%;border:1px solid #5a6464;border-top-color:transparent;margin-top:1px"><div style="position:absolute;left:1px;top:-2px;width:1px;height:3px;background:#5a6464"></div></div></div><div class="a" style="left:215px;top:396px;width:12px;height:8px;background:linear-gradient(#b9c5c5,#a3afaf);color:#4f5a5a;font-size:7px;display:flex;align-items:center;justify-content:center;letter-spacing:1px;padding-left:1px">FX</div><div class="a" style="left:231px;top:387px;width:24px;height:9px;background:linear-gradient(#3d4a3d,#262a26);border:1px solid #111;color:#7ccf7c;font-size:4.5px;font-weight:bold;text-align:center;line-height:5px;overflow:hidden">MASTER<br><span style="color:#555">SEND</span></div><div class="a" style="left:231px;top:396px;width:24px;height:9px;background:#1c1c1c;border:1px solid #3a3a3a;color:#d8d8d8;font-size:7px;text-align:center;line-height:7px;letter-spacing:1px">I/O</div><div class="a" style="left:229px;top:429px;width:24px;height:9px;background:#7f8b8b;border-radius:2px"></div><div class="t" style="left:234px;top:431px;font-size:6.6px;color:#e8eeee">center</div><div class="a" style="left:216px;top:427px;width:14px;height:14px;border-radius:50%;background:radial-gradient(circle at 45% 40%,#f2f2f2,#cfd4d4 60%,#9aa2a2);border:1.5px solid #4a5454;box-sizing:border-box"></div><div class="a" style="left:223px;top:428px;width:1px;height:5px;background:#333"></div><div class="a" style="left:217px;top:450px;width:21px;height:73px;background:#2a2a2a;border-radius:2px"></div><div class="a" style="left:217px;top:497px;width:33px;height:26px;background:#2a2a2a;border-radius:0 0 6px 2px"></div><div class="a" style="left:238px;top:496px;width:13px;height:14px;background:#aab6b6;border-radius:0 0 0 11px"></div><div class="a" style="left:228px;top:454px;width:8px;height:66px;background:#343434"></div><div class="a" style="left:229px;top:460px;width:2px;height:58px;background:#262626"></div><div class="a" style="left:233px;top:460px;width:2px;height:58px;background:#262626"></div><div class="a" style="left:222px;top:462px;width:1px;height:53px;background:#111;box-shadow:1px 0 0 #444"></div><div class="a" style="left:219px;top:467px;width:9px;height:19px;background:linear-gradient(90deg,#bdbdbd,#fafafa 40%,#e8e8e8 70%,#a8a8a8);border-radius:1px;border:1px solid #777"></div><div class="a" style="left:220px;top:476px;width:7px;height:1px;background:#555"></div><div class="a" style="left:238px;top:511px;width:12px;height:12px;border-radius:50%;background:radial-gradient(circle,#a85858,#7a3434 60%,#4e2020);"></div><div class="a" style="left:242px;top:515px;width:4px;height:4px;border-radius:50%;background:transparent;border:1px solid #eec;box-sizing:border-box;opacity:.7"></div><div class="a" style="left:243px;top:451px;width:10px;height:9px;background:linear-gradient(#e2e8e8,#c9d1d1);border:1px solid #6f7a7a;border-radius:1px;color:#8a1c1c;font-size:6.5px;font-weight:bold;display:flex;align-items:center;justify-content:center;line-height:1;">M</div><div class="a" style="left:243px;top:464px;width:10px;height:9px;background:linear-gradient(#e2e8e8,#c9d1d1);border:1px solid #6f7a7a;border-radius:1px;color:#7d7d22;font-size:6.5px;font-weight:bold;display:flex;align-items:center;justify-content:center;line-height:1;">S</div><div class="a" style="left:243px;top:476px;width:10px;height:8px;background:linear-gradient(#e2e8e8,#c9d1d1);border:1px solid #6f7a7a;border-radius:1px;color:#000;font-size:6.5px;font-weight:bold;display:flex;align-items:center;justify-content:center;line-height:1;"><span style="border-left:4px solid #7c8888;border-top:2.5px solid transparent;border-bottom:2.5px solid transparent"></span></div><div class="a" style="left:243px;top:487px;width:10px;height:8px;background:linear-gradient(#e2e8e8,#c9d1d1);border:1px solid #6f7a7a;border-radius:1px;color:#000;font-size:6.5px;font-weight:bold;display:flex;align-items:center;justify-content:center;line-height:1;"><span style="width:4px;height:4px;border-left:1px solid #556;border-top:1px solid #556;transform:rotate(45deg);margin-top:3px"></span></div><div class="a" style="left:213px;top:529px;width:44px;height:10px;background:#cdd6d6;border-top:1px solid #8a9494"></div><div class="t" style="left:233px;top:532px;font-size:6.8px;color:#555">4</div>
<div class="a" style="left:121px;top:379px;width:1px;height:40px;background:#1e1e1e"></div>
<div class="a" style="left:121px;top:419px;width:1px;height:120px;background:#4a5050"></div>
<div class="a" style="left:166px;top:379px;width:1px;height:40px;background:#1e1e1e"></div>
<div class="a" style="left:166px;top:419px;width:1px;height:120px;background:#4a5050"></div>
<div class="a" style="left:212px;top:379px;width:1px;height:40px;background:#1e1e1e"></div>
<div class="a" style="left:212px;top:419px;width:1px;height:120px;background:#4a5050"></div>
<div class="a" style="left:257px;top:379px;width:1px;height:40px;background:#1e1e1e"></div>
<div class="a" style="left:257px;top:419px;width:1px;height:120px;background:#4a5050"></div>
<div class="a" style="left:0px;top:539.5px;width:290px;height:10px;background:#474747"></div>
<div class="a" style="left:2.5px;top:540.3px;width:42px;height:9.2px;background:#1e1e1e;clip-path:polygon(0 0,100% 0,91% 100%,9% 100%)"></div>
<div class="a" style="left:3.5px;top:540.3px;width:40px;height:8.5px;background:#cdd1d1;clip-path:polygon(0 0,100% 0,91% 100%,9% 100%)"></div>
<div class="t" style="left:12px;top:542.2px;font-size:6.8px;color:#505050;letter-spacing:0.3px">Mixer</div>
<div class="a" style="left:33px;top:542.4px;width:6px;height:5.6px;border:1px solid #555;background:radial-gradient(circle,#666 0 1px,transparent 1.2px)"></div>
</div>
<div class="L" id="w2">
<div class="win" style="left:284px;top:114px;width:451px;height:368.5px"></div>
<div class="a" style="left:286px;top:116px;width:447px;height:10px;background:linear-gradient(90deg,#8c8c8c,#c2c2c2)"></div>
<div class="btn" style="left:724px;top:118.5px;width:7px;height:7px;border-color:#eee #444 #444 #eee;box-shadow:none"><span style="font-size:8px;line-height:1;margin-top:-1px;font-weight:bold">×</span></div>
<div class="ed " style="left:288px;top:140px;width:429px;height:13px;"></div>
<div class="btn" style="left:720px;top:140px;width:12px;height:13px;"></div>
<div class="a" style="left:723.3px;top:148.5px;width:1.2px;height:1.2px;background:#222"></div>
<div class="a" style="left:725.8px;top:148.5px;width:1.2px;height:1.2px;background:#222"></div>
<div class="a" style="left:728.3px;top:148.5px;width:1.2px;height:1.2px;background:#222"></div>
<div class="ed " style="left:300px;top:156px;width:291px;height:12px;">ReaSamplOmatic5000</div>
<div class="dd" style="left:581px;top:158px;width:9px;height:9px"></div>
<div class="btn" style="left:594px;top:157px;width:11px;height:12px;"><span style="font-size:9px;margin-top:-1px">+</span></div>
<div class="btn" style="left:607px;top:157px;width:29px;height:12px;">Param</div>
<div class="btn" style="left:638px;top:157px;width:46px;height:12px;">2 out</div>
<div class="btn" style="left:686px;top:157px;width:17px;height:12px;">UI</div>
<div class="knob" style="left:705.8px;top:157.10000000000002px;width:10.4px;height:10.4px"><div style="position:absolute;left:50%;top:50%;width:1px;height:5.2px;margin-left:-0.5px;transform-origin:50% 0;transform:rotate(340deg)"><div style="position:absolute;left:0;bottom:1px;width:1px;height:3.1px;background:#666"></div></div></div>
<div class="cb ck" style="left:721px;top:158px"></div>
<div class="grp" style="left:417px;top:176px;width:311px;height:302px"></div>
<div class="t" style="left:420px;top:173.5px;font-size:6.8px;background:#d4d0c8;padding:0 1px">ReaSamplOmatic5000</div>
<div class="a" style="left:420px;top:184.6px;width:304px;height:84.4px;background:#000"></div>
<div class="t" style="right:77px;top:187px;font-size:6.5px;color:#fff">&lt;file not loaded&gt;</div>
<div class="ed " style="left:420px;top:271px;width:288px;height:12px;"></div>
<div class="dd" style="left:698px;top:272px;width:10px;height:10px"></div>
<div class="a" style="left:711px;top:270px;width:13px;height:14px;background:#000;border:1px solid #777"></div>
<div class="ed " style="left:444px;top:288px;width:111px;height:12px;padding-left:6px">Note (Semitone shifted)</div>
<div class="dd" style="left:546px;top:289px;width:9px;height:10px"></div>
<div class="btn" style="left:562px;top:287px;width:111px;height:13px;">Import selected item from arrange</div>
<div class="btn" style="left:674px;top:287px;width:49px;height:13px;">Browse...</div>
<div class="ed " style="left:288px;top:300px;width:126px;height:150px;"></div>
<div class="btn" style="left:288px;top:452px;width:28px;height:14px;">Add</div>
<div class="btn" style="left:318px;top:452px;width:32px;height:14px;">Remove</div>
<div class="t" style="left:288px;top:470px;font-size:6.9px;">0.1%/0.1% CPU 0/0 spls</div>
<div class="t" style="right:334px;top:310.0px;font-size:6.8px;">Volume:</div>
<div class="knob" style="left:469px;top:307.5px;width:10px;height:10px"><div style="position:absolute;left:50%;top:50%;width:1px;height:5px;margin-left:-0.5px;transform-origin:50% 0;transform:rotate(180deg)"><div style="position:absolute;left:0;bottom:1px;width:1px;height:3.0px;background:#666"></div></div></div>
<div class="ed " style="left:482px;top:306.5px;width:23px;height:12px;">+0.0</div>
<div class="t" style="left:507px;top:310.0px;font-size:6.8px;">dB</div>
<div class="t" style="right:334px;top:325.0px;font-size:6.8px;">Min vol:</div>
<div class="knob" style="left:469px;top:322.5px;width:10px;height:10px"><div style="position:absolute;left:50%;top:50%;width:1px;height:5px;margin-left:-0.5px;transform-origin:50% 0;transform:rotate(45deg)"><div style="position:absolute;left:0;bottom:1px;width:1px;height:3.0px;background:#666"></div></div></div>
<div class="ed " style="left:482px;top:321.5px;width:23px;height:12px;">-60.0</div>
<div class="t" style="left:507px;top:325.0px;font-size:6.8px;">dB</div>
<div class="t" style="right:334px;top:340.1px;font-size:6.8px;">Note start:</div>
<div class="knob" style="left:469px;top:337.6px;width:10px;height:10px"><div style="position:absolute;left:50%;top:50%;width:1px;height:5px;margin-left:-0.5px;transform-origin:50% 0;transform:rotate(180deg)"><div style="position:absolute;left:0;bottom:1px;width:1px;height:3.0px;background:#666"></div></div></div>
<div class="ed " style="left:482px;top:336.6px;width:23px;height:12px;">0</div>
<div class="ed dis" style="left:507px;top:336.6px;width:23px;height:12px;color:#333;border-color:#9a9a9a #f4f4f4 #f4f4f4 #9a9a9a">C-1</div>
<div class="t" style="right:334px;top:356.1px;font-size:6.8px;">Note end:</div>
<div class="knob" style="left:469px;top:353.6px;width:10px;height:10px"><div style="position:absolute;left:50%;top:50%;width:1px;height:5px;margin-left:-0.5px;transform-origin:50% 0;transform:rotate(180deg)"><div style="position:absolute;left:0;bottom:1px;width:1px;height:3.0px;background:#666"></div></div></div>
<div class="ed " style="left:482px;top:352.6px;width:23px;height:12px;">127</div>
<div class="ed dis" style="left:507px;top:352.6px;width:23px;height:12px;color:#333;border-color:#9a9a9a #f4f4f4 #f4f4f4 #9a9a9a">G9</div>
<div class="t" style="right:334px;top:371.6px;font-size:6.8px;">Pitch offset</div>
<div class="knob" style="left:469px;top:369.1px;width:10px;height:10px"><div style="position:absolute;left:50%;top:50%;width:1px;height:5px;margin-left:-0.5px;transform-origin:50% 0;transform:rotate(180deg)"><div style="position:absolute;left:0;bottom:1px;width:1px;height:3.0px;background:#666"></div></div></div>
<div class="ed " style="left:482px;top:368.1px;width:23px;height:12px;">0.00</div>
<div class="t" style="left:507px;top:371.6px;font-size:6.8px;">semitones</div>
<div class="t" style="right:334px;top:387.0px;font-size:6.8px;">Attack:</div>
<div class="knob" style="left:469px;top:384.5px;width:10px;height:10px"><div style="position:absolute;left:50%;top:50%;width:1px;height:5px;margin-left:-0.5px;transform-origin:50% 0;transform:rotate(180deg)"><div style="position:absolute;left:0;bottom:1px;width:1px;height:3.0px;background:#666"></div></div></div>
<div class="ed " style="left:482px;top:383.5px;width:23px;height:12px;">1.00</div>
<div class="t" style="left:507px;top:387.0px;font-size:6.8px;">ms</div>
<div class="t" style="right:334px;top:402.1px;font-size:6.8px;">Release:</div>
<div class="knob" style="left:469px;top:399.6px;width:10px;height:10px"><div style="position:absolute;left:50%;top:50%;width:1px;height:5px;margin-left:-0.5px;transform-origin:50% 0;transform:rotate(180deg)"><div style="position:absolute;left:0;bottom:1px;width:1px;height:3.0px;background:#666"></div></div></div>
<div class="ed " style="left:482px;top:398.6px;width:23px;height:12px;">1</div>
<div class="t" style="left:507px;top:402.1px;font-size:6.8px;">ms</div>
<div class="t" style="right:334px;top:417.1px;font-size:6.8px;">MIDI Chan:</div>
<div class="knob" style="left:469px;top:414.6px;width:10px;height:10px"><div style="position:absolute;left:50%;top:50%;width:1px;height:5px;margin-left:-0.5px;transform-origin:50% 0;transform:rotate(180deg)"><div style="position:absolute;left:0;bottom:1px;width:1px;height:3.0px;background:#666"></div></div></div>
<div class="ed " style="left:482px;top:413.6px;width:23px;height:12px;">0</div>
<div class="t" style="left:507px;top:417.1px;font-size:6.8px;">(0=all;</div>
<div class="t" style="right:334px;top:432.1px;font-size:6.8px;">Probability:</div>
<div class="knob" style="left:469px;top:429.6px;width:10px;height:10px"><div style="position:absolute;left:50%;top:50%;width:1px;height:5px;margin-left:-0.5px;transform-origin:50% 0;transform:rotate(180deg)"><div style="position:absolute;left:0;bottom:1px;width:1px;height:3.0px;background:#666"></div></div></div>
<div class="ed " style="left:482px;top:428.6px;width:23px;height:12px;">100</div>
<div class="t" style="right:216px;top:310.0px;font-size:6.5px;">Velocity maximum:</div>
<div class="knob" style="left:589px;top:307.5px;width:10px;height:10px"><div style="position:absolute;left:50%;top:50%;width:1px;height:5px;margin-left:-0.5px;transform-origin:50% 0;transform:rotate(180deg)"><div style="position:absolute;left:0;bottom:1px;width:1px;height:3.0px;background:#666"></div></div></div>
<div class="ed " style="left:602px;top:306.5px;width:23px;height:12px;">127</div>
<div class="t" style="right:216px;top:325.0px;font-size:6.5px;">Velocity minimum:</div>
<div class="knob" style="left:589px;top:322.5px;width:10px;height:10px"><div style="position:absolute;left:50%;top:50%;width:1px;height:5px;margin-left:-0.5px;transform-origin:50% 0;transform:rotate(180deg)"><div style="position:absolute;left:0;bottom:1px;width:1px;height:3.0px;background:#666"></div></div></div>
<div class="ed " style="left:602px;top:321.5px;width:23px;height:12px;">0</div>
<div class="t" style="right:216px;top:340.1px;font-size:6.5px;">Pitch@start:</div>
<div class="knob" style="left:589px;top:337.6px;width:10px;height:10px"><div style="position:absolute;left:50%;top:50%;width:1px;height:5px;margin-left:-0.5px;transform-origin:50% 0;transform:rotate(180deg)"><div style="position:absolute;left:0;bottom:1px;width:1px;height:3.0px;background:#666"></div></div></div>
<div class="ed " style="left:602px;top:336.6px;width:23px;height:12px;">-69</div>
<div class="t" style="left:627px;top:340.1px;font-size:6.8px;">semitones</div>
<div class="t" style="right:216px;top:356.1px;font-size:6.5px;color:#9a9a9a">Pitch@end:</div>
<div class="knob" style="left:589px;top:353.6px;width:10px;height:10px"><div style="position:absolute;left:50%;top:50%;width:1px;height:5px;margin-left:-0.5px;transform-origin:50% 0;transform:rotate(180deg)"><div style="position:absolute;left:0;bottom:1px;width:1px;height:3.0px;background:#666"></div></div></div>
<div class="ed dis" style="left:602px;top:352.6px;width:23px;height:12px;">59</div>
<div class="t" style="left:627px;top:356.1px;font-size:6.8px;color:#9a9a9a">semitones</div>
<div class="t" style="right:216px;top:371.6px;font-size:6.5px;">Pitch bend:</div>
<div class="knob" style="left:589px;top:369.1px;width:10px;height:10px"><div style="position:absolute;left:50%;top:50%;width:1px;height:5px;margin-left:-0.5px;transform-origin:50% 0;transform:rotate(180deg)"><div style="position:absolute;left:0;bottom:1px;width:1px;height:3.0px;background:#666"></div></div></div>
<div class="ed " style="left:602px;top:368.1px;width:23px;height:12px;">2.0</div>
<div class="t" style="left:627px;top:371.6px;font-size:6.8px;">semitones</div>
<div class="t" style="right:216px;top:387.0px;font-size:6.5px;">Sustain</div>
<div class="knob" style="left:589px;top:384.5px;width:10px;height:10px"><div style="position:absolute;left:50%;top:50%;width:1px;height:5px;margin-left:-0.5px;transform-origin:50% 0;transform:rotate(180deg)"><div style="position:absolute;left:0;bottom:1px;width:1px;height:3.0px;background:#666"></div></div></div>
<div class="ed " style="left:602px;top:383.5px;width:23px;height:12px;">+0.0</div>
<div class="t" style="left:627px;top:387.0px;font-size:6.8px;">dB</div>
<div class="t" style="right:216px;top:402.1px;font-size:6.5px;">Decay:</div>
<div class="knob" style="left:589px;top:399.6px;width:10px;height:10px"><div style="position:absolute;left:50%;top:50%;width:1px;height:5px;margin-left:-0.5px;transform-origin:50% 0;transform:rotate(180deg)"><div style="position:absolute;left:0;bottom:1px;width:1px;height:3.0px;background:#666"></div></div></div>
<div class="ed " style="left:602px;top:398.6px;width:23px;height:12px;">250</div>
<div class="t" style="left:627px;top:402.1px;font-size:6.8px;">ms</div>
<div class="t" style="right:216px;top:417.1px;font-size:6.5px;">Max voices:</div>
<div class="knob" style="left:589px;top:414.6px;width:10px;height:10px"><div style="position:absolute;left:50%;top:50%;width:1px;height:5px;margin-left:-0.5px;transform-origin:50% 0;transform:rotate(180deg)"><div style="position:absolute;left:0;bottom:1px;width:1px;height:3.0px;background:#666"></div></div></div>
<div class="ed " style="left:602px;top:413.6px;width:23px;height:12px;">1</div>
<div class="t" style="left:667px;top:310px;font-size:6.8px;">Pan:</div>
<div class="knob" style="left:686px;top:308px;width:10px;height:10px"><div style="position:absolute;left:50%;top:50%;width:1px;height:5px;margin-left:-0.5px;transform-origin:50% 0;transform:rotate(180deg)"><div style="position:absolute;left:0;bottom:1px;width:1px;height:3.0px;background:#666"></div></div></div>
<div class="ed " style="left:700px;top:307px;width:23px;height:12px;">0.50</div>
<div class="cb" style="left:508px;top:430.6px"></div>
<div class="t" style="left:518px;top:431.6px;font-size:6.8px;">Round-robin</div>
<div class="cb" style="left:565px;top:430.6px"></div>
<div class="t" style="left:576px;top:431.6px;font-size:6.7px;">Remove played notes from FX chain MIDI stream</div>
<div class="cb ck" style="left:429px;top:445.75px"></div>
<div class="t" style="left:439px;top:445.25px;font-size:7px;">Obey note-offs</div>
<div class="cb" style="left:489px;top:445.75px"></div>
<div class="t" style="left:500px;top:445.25px;font-size:6.8px;">Loop</div>
<div class="t" style="left:522px;top:445.25px;font-size:6.8px;">Xfade:</div>
<div class="knob" style="left:546px;top:444.75px;width:10px;height:10px"><div style="position:absolute;left:50%;top:50%;width:1px;height:5px;margin-left:-0.5px;transform-origin:50% 0;transform:rotate(180deg)"><div style="position:absolute;left:0;bottom:1px;width:1px;height:3.0px;background:#666"></div></div></div>
<div class="ed " style="left:559px;top:443.75px;width:21px;height:12px;">0.00</div>
<div class="t" style="left:582px;top:446.25px;font-size:6.8px;">ms</div>
<div class="t" style="left:600px;top:445.25px;font-size:7px;">Loop start offset:</div>
<div class="knob" style="left:656px;top:444.75px;width:10px;height:10px"><div style="position:absolute;left:50%;top:50%;width:1px;height:5px;margin-left:-0.5px;transform-origin:50% 0;transform:rotate(180deg)"><div style="position:absolute;left:0;bottom:1px;width:1px;height:3.0px;background:#666"></div></div></div>
<div class="ed " style="left:669px;top:443.75px;width:21px;height:12px;">0.00</div>
<div class="t" style="left:692px;top:446.25px;font-size:6.8px;">ms</div>
<div class="t" style="left:428px;top:463.5px;font-size:6.5px;">Resample mode:</div>
<div class="ed " style="left:481px;top:460px;width:150px;height:12px;">(project default)</div>
<div class="dd" style="left:621px;top:461px;width:10px;height:10px"></div>
<div class="t" style="right:114px;top:459px;font-size:6.8px;">Cache samples</div>
<div class="t" style="right:114px;top:466px;font-size:6.8px;">smaller than:</div>
<div class="ed " style="left:689px;top:459px;width:20px;height:13px;">64</div>
<div class="t" style="left:712px;top:463px;font-size:6.5px;">MB</div>
</div>
<div class="L" id="w1">
<div class="win" style="left:-1px;top:50px;width:455px;height:315.5px"></div>
<div class="a" style="left:2px;top:52px;width:449px;height:9.7px;background:linear-gradient(90deg,#8c8c8c,#c2c2c2)"></div>
<div class="t" style="left:3.8px;top:54.2px;font-size:6.6px;color:#cfcfcf">FX: Track 1</div>
<div class="btn" style="left:443px;top:53.8px;width:7px;height:7px;border-color:#eee #444 #444 #eee;box-shadow:none"><span style="font-size:8px;line-height:1;margin-top:-1px;font-weight:bold">×</span></div>
<div class="t" style="left:6px;top:66.2px;font-size:7px;"><u style="text-decoration-color:#aaa;text-decoration-thickness:0.6px;text-underline-offset:0.5px">F</u>X</div>
<div class="t" style="left:21px;top:66.2px;font-size:7px;"><u style="text-decoration-color:#aaa;text-decoration-thickness:0.6px;text-underline-offset:0.5px">E</u>dit</div>
<div class="t" style="left:40px;top:66.2px;font-size:6.6px;"><u style="text-decoration-color:#aaa;text-decoration-thickness:0.6px;text-underline-offset:0.5px">O</u>ptions</div>
<div class="ed " style="left:5px;top:76px;width:124px;height:257px;border-color:#9a9a9a #fff #fff #9a9a9a;box-shadow:inset 1px 1px 0 #c8c8c8"></div>
<div class="a" style="left:16.3px;top:77px;width:78px;height:10.5px;background:#cccccc"></div>
<div class="cb ck" style="left:7.9px;top:77.9px;border:1px solid #333;box-shadow:none"></div>
<div class="t" style="left:19px;top:80px;font-size:6.5px;">VST: ReaPitch (Cockos)</div>
<div class="btn" style="left:4px;top:335.3px;width:29px;height:14.5px;">Add</div>
<div class="btn" style="left:34px;top:335.3px;width:32px;height:14.5px;">Remove</div>
<div class="t" style="left:4px;top:353.5px;font-size:6.9px;">0.4%/0.4% CPU 5120/5120 spls</div>
<div class="ed " style="left:134px;top:76px;width:302px;height:12px;"></div>
<div class="btn" style="left:439px;top:75px;width:12px;height:13px;"></div>
<div class="a" style="left:442.3px;top:83.5px;width:1.2px;height:1.2px;background:#222"></div>
<div class="a" style="left:444.8px;top:83.5px;width:1.2px;height:1.2px;background:#222"></div>
<div class="a" style="left:447.3px;top:83.5px;width:1.2px;height:1.2px;background:#222"></div>
<div class="ed " style="left:137px;top:92px;width:173px;height:12px;padding-left:1.5px">No preset</div>
<div class="dd" style="left:300px;top:93px;width:10px;height:11px"></div>
<div class="btn" style="left:313px;top:92px;width:12px;height:12px;"><span style="font-size:9px;margin-top:-1px">+</span></div>
<div class="btn" style="left:326px;top:92px;width:29px;height:12px;">Param</div>
<div class="btn" style="left:356px;top:92px;width:47px;height:12px;">2 in 2 out</div>
<div class="btn" style="left:405px;top:92px;width:17px;height:12px;">UI</div>
<div class="knob" style="left:424.3px;top:93.1px;width:10.4px;height:10.4px"><div style="position:absolute;left:50%;top:50%;width:1px;height:5.2px;margin-left:-0.5px;transform-origin:50% 0;transform:rotate(340deg)"><div style="position:absolute;left:0;bottom:1px;width:1px;height:3.1px;background:#666"></div></div></div>
<div class="cb ck" style="left:440px;top:94px"></div>
<div class="grp" style="left:134px;top:110.3px;width:314px;height:248.2px"></div>
<div class="t" style="left:137px;top:109px;font-size:6.8px;background:#d4d0c8;padding:0 1px">ReaPitch</div>
<div class="t" style="left:141px;top:119px;font-size:6.8px;">Wet:</div>
<div class="t" style="left:167px;top:119px;font-size:6.8px;">Dry:</div>
<div class="a" style="left:143px;top:126px;width:12px;height:154px;background:#c3c0b9;border:1px solid #aeaba4"></div>
<div class="a" style="left:148px;top:136px;width:2px;height:137px;background:#555"></div>
<div class="th vt" style="left:143px;top:164px;width:12px;height:19px"></div>
<div class="a" style="left:168px;top:126px;width:12px;height:154px;background:#c3c0b9;border:1px solid #aeaba4"></div>
<div class="a" style="left:173px;top:136px;width:2px;height:137px;background:#555"></div>
<div class="a" style="left:168px;top:173px;width:12px;height:1px;background:#555"></div>
<div class="th vt" style="left:168px;top:260px;width:12px;height:19px"></div>
<div class="ed " style="left:139px;top:283px;width:21px;height:13px;">+0.0</div>
<div class="ed " style="left:163px;top:283px;width:22px;height:13px;">-inf</div>
<div class="a" style="left:191px;top:127px;width:253px;height:153px;border:1px solid;border-color:#f4f3f0 #5a5a5a #5a5a5a #f4f3f0;box-shadow:inset -1px -1px 0 #a8a59f"></div>
<div class="a" style="left:191px;top:114px;width:37px;height:15px;background:#d4d0c8;border:1px solid;border-color:#f4f3f0 #5a5a5a transparent #f4f3f0;border-bottom:none;border-radius:2px 2px 0 0"></div>
<div class="t" style="left:207px;top:119px;font-size:6.8px;">1</div>
<div class="cb ck" style="left:198.8px;top:138.3px"></div>
<div class="t" style="left:210px;top:140px;font-size:6.6px;">Enabled</div>
<div class="cb" style="left:243.5px;top:138.3px"></div>
<div class="t" style="left:255px;top:140px;font-size:6.7px;">Solo active shifter</div>
<div class="t" style="right:550px;top:159.0px;font-size:6.8px;">Shift (full</div>
<div class="hs" style="left:255px;top:155.0px;width:111px;height:12px"><div class="g" style="left:10px;width:90px"></div><div class="th" style="left:46px;top:1px;width:16px;height:9px"></div></div>
<div class="ed " style="left:369px;top:154.0px;width:27px;height:14px;">0.00</div>
<div class="t" style="left:398px;top:159.0px;font-size:6.6px;">semitones</div>
<div class="t" style="right:550px;top:174.25px;font-size:6.8px;">Shift (cents):</div>
<div class="hs" style="left:255px;top:170.25px;width:111px;height:12px"><div class="g" style="left:10px;width:90px"></div><div class="th" style="left:46px;top:1px;width:16px;height:9px"></div></div>
<div class="ed " style="left:369px;top:169.25px;width:27px;height:14px;">0</div>
<div class="t" style="left:398px;top:174.25px;font-size:6.6px;">cents</div>
<div class="t" style="right:550px;top:189.5px;font-size:6.8px;">Shift</div>
<div class="hs" style="left:255px;top:185.5px;width:111px;height:12px"><div class="g" style="left:10px;width:90px"></div><div class="th" style="left:46px;top:1px;width:16px;height:9px"></div></div>
<div class="ed " style="left:369px;top:184.5px;width:27px;height:14px;">0</div>
<div class="t" style="left:398px;top:189.5px;font-size:6.6px;">semitones</div>
<div class="t" style="right:550px;top:204.75px;font-size:6.8px;">Shift (octaves):</div>
<div class="hs" style="left:255px;top:200.75px;width:111px;height:12px"><div class="g" style="left:10px;width:90px"></div><div class="th" style="left:46px;top:1px;width:16px;height:9px"></div></div>
<div class="ed " style="left:369px;top:199.75px;width:27px;height:14px;">0</div>
<div class="t" style="left:398px;top:204.75px;font-size:6.6px;">octaves</div>
<div class="t" style="right:550px;top:220.0px;font-size:6.8px;">Formant shift</div>
<div class="hs" style="left:255px;top:216.0px;width:111px;height:12px"><div class="g" style="left:10px;width:90px"></div><div class="th" style="left:46px;top:1px;width:16px;height:9px"></div></div>
<div class="ed " style="left:369px;top:215.0px;width:27px;height:14px;">0.00</div>
<div class="t" style="left:398px;top:220.0px;font-size:6.6px;">semitones</div>
<div class="t" style="right:550px;top:235.25px;font-size:6.8px;">Formant shift:</div>
<div class="hs" style="left:255px;top:231.25px;width:111px;height:12px"><div class="g" style="left:10px;width:90px"></div><div class="th" style="left:46px;top:1px;width:16px;height:9px"></div></div>
<div class="ed " style="left:369px;top:230.25px;width:27px;height:14px;">0</div>
<div class="t" style="left:398px;top:235.25px;font-size:6.6px;">cents</div>
<div class="t" style="right:550px;top:250.5px;font-size:6.8px;">Formant shift:</div>
<div class="hs" style="left:255px;top:246.5px;width:111px;height:12px"><div class="g" style="left:10px;width:90px"></div><div class="th" style="left:46px;top:1px;width:16px;height:9px"></div></div>
<div class="ed " style="left:369px;top:245.5px;width:27px;height:14px;">0</div>
<div class="t" style="left:398px;top:250.5px;font-size:6.6px;">semitones</div>
<div class="t" style="left:193px;top:266px;font-size:6.8px;">Volume:</div>
<div class="hs" style="left:221px;top:263px;width:90px;height:11px"><div class="g" style="left:10px;width:68px"></div><div class="th" style="left:53px;top:1px;width:16px;height:8px"></div></div>
<div class="ed " style="left:315px;top:262px;width:27px;height:13px;">+0.0</div>
<div class="hs" style="left:344px;top:263px;width:51px;height:11px"><div class="g" style="left:9px;width:31px"></div><div class="th" style="left:16px;top:1px;width:16px;height:8px"></div></div>
<div class="ed " style="left:398px;top:262px;width:27px;height:13px;">0.0</div>
<div class="btn" style="left:190px;top:284px;width:40px;height:15px;">Add shifter</div>
<div class="btn" style="left:231px;top:284px;width:48px;height:15px;">Delete shifter</div>
<div class="btn" style="left:282px;top:284px;width:36px;height:15px;">Reset all</div>
<div class="cb" style="left:321px;top:286px"></div>
<div class="t" style="left:333px;top:289px;font-size:7px;">Autocorrect master playrate chang</div>
<div class="grp" style="left:138px;top:304px;width:223px;height:52.5px"></div>
<div class="t" style="left:142.5px;top:302.3px;font-size:6.8px;background:#d4d0c8;padding:0 1px">Pitch Shift Mode</div>
<div class="t" style="left:144px;top:316px;font-size:6.8px;">Algorithm:</div>
<div class="ed " style="left:178px;top:312px;width:177px;height:13px;">Project Default</div>
<div class="dd" style="left:345px;top:314px;width:9px;height:10px"></div>
<div class="t" style="left:144px;top:330px;font-size:6.8px;color:#a0a0a0">Parameter:</div>
<div class="ed dis" style="left:178px;top:326px;width:177px;height:12px;"></div>
<div class="dd" style="left:345px;top:327px;width:9px;height:10px;opacity:.5"></div>
<div class="cb ck" style="left:143.5px;top:341.7px"></div>
<div class="t" style="left:155px;top:344px;font-size:6.8px;">Stereo</div>
<div class="t" style="left:191px;top:344px;font-size:7px;">Note: formant adjustment not supported with all</div>
</div>
</div></body></html>
